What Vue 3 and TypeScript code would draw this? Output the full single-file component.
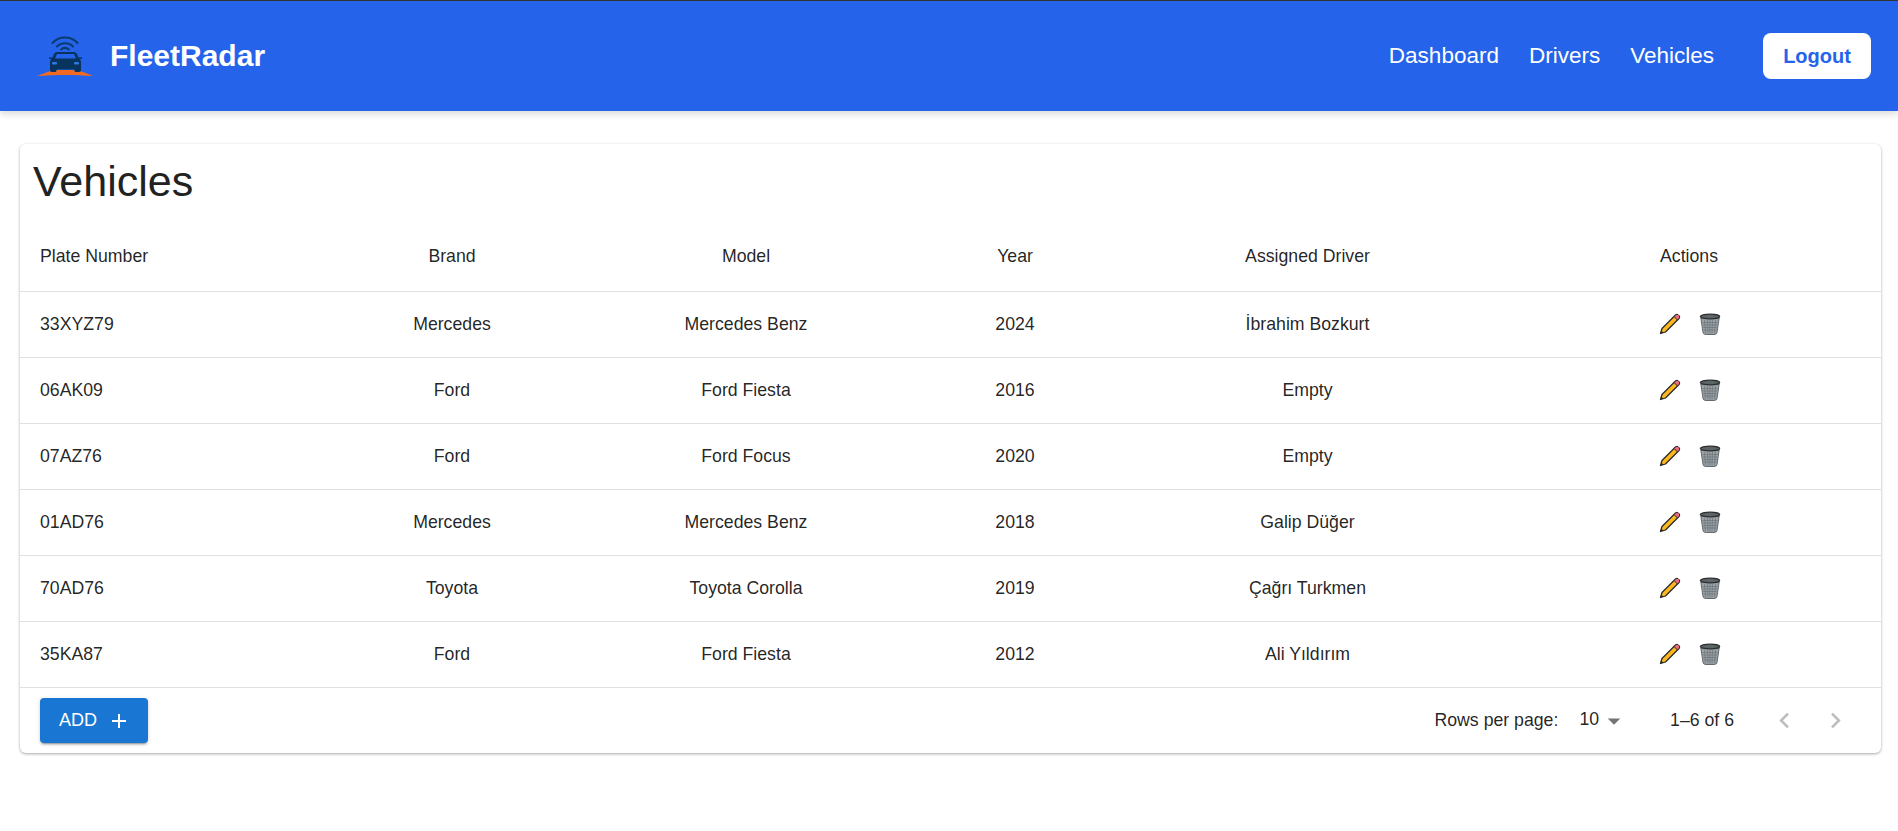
<template>
  <div class="page">
    <header class="topbar">
      <div class="brand">
        <svg class="logo" viewBox="36 34 58 41" width="58" height="41">
          <path d="M37 74 C48 69.500 54 68 60 68 H71 C78 68 85 70 93 74 C75 72.500 55 72.500 37 74Z" fill="#f26a21" />
          <path d="M52.500 41 C59 33.500 71 33.500 77.500 41" class="wave" />
          <path d="M57 44.500 C61 40 69 40 73 44.500" class="wave" />
          <path d="M61 47.500 C63.500 45.500 66.500 45.500 69 47.500" class="wave" />
          <path
            d="M57 50 H74 Q76 50 77 52 L78.500 55.500 H82 V57 H79.500 Q81 58.500 81 60 V68 Q81 70 79 70 H76 Q74.500 70 74.500 68.500 V67.500 H56.500 V68.500 Q56.500 70 55 70 H52 Q50 70 50 68 V60 Q50 58.500 51.500 57 H49 V55.500 H52.500 L54 52 Q55 50 57 50Z"
            fill="#07335f"
          />
          <path d="M57 52 H74 L76 56.500 H55Z" fill="#2563eb" />
          <rect x="52" y="60" width="5" height="2.500" rx="1" fill="#2f7be0" />
          <rect x="74" y="60" width="5" height="2.500" rx="1" fill="#2f7be0" />
        </svg>
        <span class="brand-name">FleetRadar</span>
      </div>
      <nav class="nav">
        <a v-for="link in links" :key="link">{{ link }}</a>
        <button class="logout">Logout</button>
      </nav>
    </header>

    <section class="card">
      <h1 class="title">Vehicles</h1>
      <table class="grid">
        <colgroup>
          <col v-for="(w, i) in colWidths" :key="i" :style="{ width: w + 'px' }" />
        </colgroup>
        <thead>
          <tr>
            <th class="left">Plate Number</th>
            <th>Brand</th>
            <th>Model</th>
            <th>Year</th>
            <th>Assigned Driver</th>
            <th>Actions</th>
          </tr>
        </thead>
        <tbody>
          <tr v-for="v in vehicles" :key="v.plate">
            <td class="left">{{ v.plate }}</td>
            <td>{{ v.brand }}</td>
            <td>{{ v.model }}</td>
            <td>{{ v.year }}</td>
            <td>{{ v.driver }}</td>
            <td>
              <div class="actions">
                <svg viewBox="0 0 24 24" width="24" height="24">
                  <path d="M2.500 21.500 L4 16.500 L17.500 3 L21 6.500 L7.500 20Z" fill="#fbb81c" stroke="#2b2b2b" stroke-width="1.300" stroke-linejoin="round" />
                  <path d="M16 4.500 L17.800 2.700 Q19 1.800 20.200 2.700 L21.300 3.800 Q22.200 5 21.300 6.200 L19.500 8Z" fill="#ea6a80" stroke="#2b2b2b" stroke-width="1" />
                  <path d="M2.500 21.500 L3.300 18.500 L5.500 20.700Z" fill="#2b2b2b" />
                </svg>
                <svg viewBox="0 0 24 24" width="24" height="24">
                  <path d="M2.800 6 L5 20.500 Q5.300 22.500 8 22.500 H16 Q18.700 22.500 19 20.500 L21.200 6Z" fill="#9aa2a7" stroke="#4a5054" stroke-width="0.800" />
                  <path d="M6.500 8 L7.500 21 M9.500 8 L10 21.500 M12 8 V21.500 M14.500 8 L14 21.500 M17.500 8 L16.500 21 M4.500 10.500 H19.500 M5 13 H19 M5.300 15.500 H18.700 M5.700 18 H18.300" stroke="#6a7277" stroke-width="0.700" fill="none" />
                  <ellipse cx="12" cy="4.500" rx="9.700" ry="2.300" fill="#5d6468" stroke="#2d2d2d" stroke-width="1.200" />
                </svg>
              </div>
            </td>
          </tr>
        </tbody>
      </table>
      <div class="footer">
        <button class="add">
          ADD
          <svg viewBox="0 0 24 24" width="24" height="24"><path d="M19 13h-6v6h-2v-6H5v-2h6V5h2v6h6v2z" fill="#fff" /></svg>
        </button>
        <div class="pager">
          <span>Rows per page:</span>
          <span class="select">
            <span class="select-value">10</span>
            <svg viewBox="0 0 24 24" width="30" height="30"><path d="M7 10l5 5 5-5z" fill="#757575" /></svg>
          </span>
          <span class="count">1–6 of 6</span>
          <div class="arrows">
            <svg viewBox="0 0 24 24" width="31" height="31"><path d="M15.410 7.410 14 6l-6 6 6 6 1.410-1.410L10.830 12z" fill="#bdbdbd" /></svg>
            <svg viewBox="0 0 24 24" width="31" height="31"><path d="M10 6 8.590 7.410 13.170 12l-4.580 4.590L10 18l6-6z" fill="#bdbdbd" /></svg>
          </div>
        </div>
      </div>
    </section>
  </div>
</template>

<script setup lang="ts">
interface Vehicle {
  plate: string
  brand: string
  model: string
  year: number
  driver: string
}

const links = ['Dashboard', 'Drivers', 'Vehicles']
const colWidths = [304, 256, 332, 206, 379, 384]

const vehicles: Vehicle[] = [
  { plate: '33XYZ79', brand: 'Mercedes', model: 'Mercedes Benz', year: 2024, driver: 'İbrahim Bozkurt' },
  { plate: '06AK09', brand: 'Ford', model: 'Ford Fiesta', year: 2016, driver: 'Empty' },
  { plate: '07AZ76', brand: 'Ford', model: 'Ford Focus', year: 2020, driver: 'Empty' },
  { plate: '01AD76', brand: 'Mercedes', model: 'Mercedes Benz', year: 2018, driver: 'Galip Düğer' },
  { plate: '70AD76', brand: 'Toyota', model: 'Toyota Corolla', year: 2019, driver: 'Çağrı Turkmen' },
  { plate: '35KA87', brand: 'Ford', model: 'Ford Fiesta', year: 2012, driver: 'Ali Yıldırım' }
]
</script>

<style>
body {
  background: #fff;
}
</style>

<style scoped>
.page {
  font-family: "Liberation Sans", Arial, sans-serif;
  color: rgba(0, 0, 0, 0.87);
  min-height: 831px;
}

.topbar {
  height: 110px;
  border-top: 1px solid #333;
  background: #2563eb;
  box-shadow: 0 4px 6px rgba(0, 0, 0, 0.12);
  display: flex;
  align-items: center;
  justify-content: space-between;
  padding: 0 27px 0 36px;
}

.brand {
  display: flex;
  align-items: center;
  gap: 16px;
}

.logo {
  display: block;
}

.wave {
  fill: none;
  stroke: #0b3a6c;
  stroke-width: 2;
  stroke-linecap: round;
}

.brand-name {
  color: #fff;
  font-size: 30px;
  font-weight: 700;
}

.nav {
  display: flex;
  align-items: center;
  gap: 30px;
}

.nav a {
  color: #fff;
  font-size: 22.500px;
}

.logout {
  margin-left: 19px;
  width: 108px;
  height: 46px;
  border: none;
  border-radius: 8px;
  background: #fff;
  color: #2563eb;
  font: 700 20px "Liberation Sans", Arial, sans-serif;
}

.card {
  margin: 33px 17px 0 20px;
  border-radius: 6px;
  background: #fff;
  box-shadow: 0 1px 3px rgba(0, 0, 0, 0.35);
}

.title {
  margin: 0;
  padding: 12px 13px 0;
  font-size: 43px;
  font-weight: 400;
  line-height: 50px;
  height: 65px;
  color: #222;
}

.grid {
  width: 100%;
  table-layout: fixed;
  border-collapse: collapse;
  font-size: 17.700px;
}

th,
td {
  text-align: center;
  font-weight: 400;
  padding: 0 20px;
  border-bottom: 1px solid #e0e0e0;
}

th {
  height: 70px;
}

td {
  height: 65px;
}

.left {
  text-align: left;
}

.actions {
  display: flex;
  justify-content: center;
  gap: 16px;
  margin: -2px 0 0 2px;
}

.footer {
  height: 65px;
  display: flex;
  align-items: center;
  justify-content: space-between;
  padding: 0 30px 0 20px;
}

.add {
  display: flex;
  align-items: center;
  justify-content: center;
  gap: 10px;
  width: 108px;
  height: 45px;
  padding: 0 0 0 2px;
  border: none;
  border-radius: 4px;
  background: #1976d2;
  color: #fff;
  font: 500 18px "Liberation Sans", Arial, sans-serif;
  box-shadow: 0 3px 1px -2px rgba(0, 0, 0, 0.2), 0 2px 2px rgba(0, 0, 0, 0.14), 0 1px 5px rgba(0, 0, 0, 0.12);
}

.pager {
  display: flex;
  align-items: center;
  font-size: 17.700px;
}

.select {
  display: flex;
  align-items: center;
  margin-left: 21px;
}

.select-value {
  margin-top: -2px;
}

.count {
  margin-left: 41px;
}

.arrows {
  display: flex;
  gap: 20px;
  margin-left: 35px;
}
</style>
